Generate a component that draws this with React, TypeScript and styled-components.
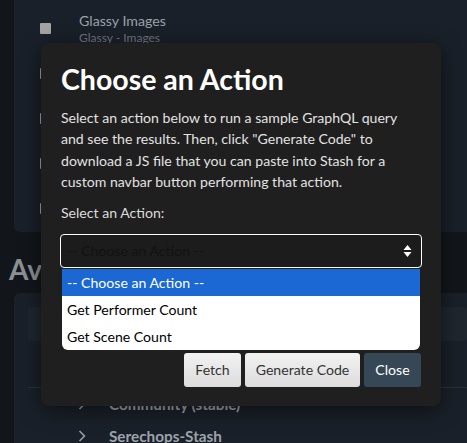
import React from "react";
import styled, { createGlobalStyle } from "styled-components";

const GlobalStyle = createGlobalStyle`
  html, body { margin: 0; padding: 0; background: #12161a; overflow: hidden; }
  * { box-sizing: border-box; }
  body { font-family: "Lato", "Noto Sans", sans-serif; }
`;

const Page = styled.div`
  position: relative;
  width: 467px;
  height: 443px;
  overflow: hidden;
  background: #12161a;
  display: flex;
  flex-direction: column;
  & > * { flex-shrink: 0; }
`;

const Card = styled.div<{ $top?: boolean }>`
  margin-left: 14px;
  background: #1a2029;
  border-radius: ${(p) => (p.$top ? "0 0 0 6px" : "6px 0 0 0")};
  display: flex;
  flex-direction: column;
`;

const PluginList = styled(Card)`
  height: 232px;
  padding: 6px 0 0 26px;
`;

const PluginRow = styled.div`
  height: 45px;
  display: flex;
  align-items: center;
  gap: 28px;
  flex-shrink: 0;
`;

const Check = styled.span`
  width: 11px;
  height: 11px;
  background: #a3a3a3;
  border-radius: 1px;
  flex: none;
`;

const PluginText = styled.div`
  display: flex;
  flex-direction: column;
`;

const PluginName = styled.span`
  font-size: 14.2px;
  color: #9aa1a8;
  line-height: 19px;
`;

const PluginSub = styled.span`
  font-size: 12px;
  color: #6f767d;
  line-height: 16px;
`;

const Heading = styled.h2`
  margin: 22px 0 0 9px;
  height: 39px;
  font-size: 28px;
  font-weight: 700;
  color: #8b9095;
  line-height: 30px;
  white-space: nowrap;
`;

const SourceCard = styled(Card)`
  flex: 1;
  padding: 14px 0 0 14px;
`;

const SearchBox = styled.div`
  height: 34px;
  background: #1f262e;
  border-radius: 4px;
  flex-shrink: 0;
`;

const Divider = styled.div`
  height: 1px;
  background: #2a3139;
  margin-top: 46px;
  flex-shrink: 0;
`;

const SourceRow = styled.div`
  display: flex;
  align-items: center;
  height: 32px;
  padding-left: 50px;
  gap: 23px;
  color: #9da3a9;
  font-weight: 700;
  font-size: 15.3px;
  flex-shrink: 0;
  &:first-of-type { margin-top: 3px; }
`;

const Chevron = styled.svg`
  width: 8px;
  height: 12px;
`;

const Modal = styled.div`
  position: absolute;
  left: 41px;
  top: 43px;
  width: 400px;
  height: 363px;
  background: #1f1f1f;
  border-radius: 8px;
  box-shadow: 0 4px 20px rgba(0, 0, 0, 0.5);
  padding: 18px 20px 0 20px;
  display: flex;
  flex-direction: column;
`;

const Title = styled.h1`
  margin: 0;
  font-size: 28.5px;
  font-weight: 700;
  color: #ffffff;
  line-height: 36px;
`;

const Para = styled.p`
  margin: 10px 0 0 0;
  font-size: 14.1px;
  line-height: 21.4px;
  color: #e2e2e2;
`;

const Label = styled.div`
  margin-top: 9px;
  font-size: 14.1px;
  line-height: 21px;
  color: #dcdcdc;
`;

const SelectWrap = styled.div`
  position: relative;
  margin-top: 11px;
  margin-left: -1px;
  width: 362px;
`;

const SelectBox = styled.div`
  height: 34px;
  border: 1px solid #ffffff;
  border-radius: 4px;
  background: #1c1c1c;
  display: flex;
  align-items: center;
  justify-content: space-between;
  padding: 0 9px 0 6px;
  font-size: 14.1px;
  color: #121212;
`;

const Arrows = styled.svg`
  width: 9px;
  height: 14px;
`;

const Options = styled.ul`
  position: absolute;
  left: 2px;
  top: 35px;
  width: 358px;
  margin: 0;
  padding: 0;
  list-style: none;
  background: #ffffff;
  border-radius: 0 0 6px 6px;
  overflow: hidden;
`;

const Option = styled.li<{ $active?: boolean }>`
  height: 27px;
  display: flex;
  align-items: center;
  padding-left: 5px;
  font-size: 14.1px;
  color: ${(p) => (p.$active ? "#ffffff" : "#000000")};
  background: ${(p) => (p.$active ? "#1b67d3" : "transparent")};
`;

const Buttons = styled.div`
  margin-top: 85px;
  display: flex;
  justify-content: flex-end;
  gap: 4px;
`;

const Btn = styled.button<{ $dark?: boolean; $w: number }>`
  width: ${(p) => p.$w}px;
  height: 34px;
  border: none;
  border-radius: 3px;
  font-family: inherit;
  font-size: 14.1px;
  color: ${(p) => (p.$dark ? "#ffffff" : "#333333")};
  background: ${(p) =>
    p.$dark ? "#364855" : "linear-gradient(#f2f2f2, #dcdcdc)"};
  padding: 0;
`;

const chevron = (
  <Chevron viewBox="0 0 8 12">
    <path d="M1.5 1 L6.5 6 L1.5 11" fill="none" stroke="#9da3a9" strokeWidth="1.5" />
  </Chevron>
);

export default function App() {
  return (
    <>
      <GlobalStyle />
      <Page>
        <PluginList $top>
          <PluginRow>
            <Check />
            <PluginText>
              <PluginName>Glassy Images</PluginName>
              <PluginSub>Glassy - Images</PluginSub>
            </PluginText>
          </PluginRow>
          <PluginRow><Check /></PluginRow>
          <PluginRow><Check /></PluginRow>
          <PluginRow><Check /></PluginRow>
          <PluginRow><Check /></PluginRow>
        </PluginList>
        <Heading>Available Plugins</Heading>
        <SourceCard>
          <SearchBox />
          <Divider />
          <SourceRow>
            {chevron}
            Community (stable)
          </SourceRow>
          <SourceRow>
            {chevron}
            Serechops-Stash
          </SourceRow>
        </SourceCard>
        <Modal>
          <Title>Choose an Action</Title>
          <Para>
            Select an action below to run a sample GraphQL query and see the
            results. Then, click "Generate Code" to download a JS file that you
            can paste into Stash for a custom navbar button performing that
            action.
          </Para>
          <Label>Select an Action:</Label>
          <SelectWrap>
            <SelectBox>
              <span>-- Choose an Action --</span>
              <Arrows viewBox="0 0 9 14">
                <path d="M4.5 1 L8.5 6 L0.5 6 Z" fill="#ffffff" />
                <path d="M4.5 13 L8.5 8 L0.5 8 Z" fill="#ffffff" />
              </Arrows>
            </SelectBox>
            <Options>
              <Option $active>-- Choose an Action --</Option>
              <Option>Get Performer Count</Option>
              <Option>Get Scene Count</Option>
            </Options>
          </SelectWrap>
          <Buttons>
            <Btn $w={57}>Fetch</Btn>
            <Btn $w={115}>Generate Code</Btn>
            <Btn $w={57} $dark>Close</Btn>
          </Buttons>
        </Modal>
      </Page>
    </>
  );
}
